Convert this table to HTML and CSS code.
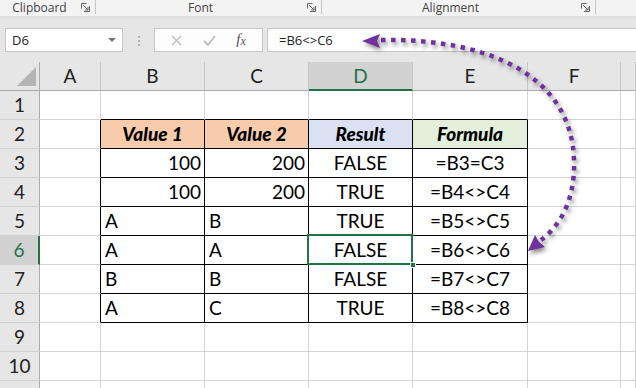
FILE: index.html
```html
<!DOCTYPE html>
<html lang="en">

<head>
    <meta charset="UTF-8">
    <meta name="viewport" content="width=device-width, initial-scale=1.0">
    <title>Not equal operator</title>
    <link rel="stylesheet" href="styles.css">
</head>

<body>
    <!-- ribbon group labels -->
    <div class="ribbon">
        <div class="group group-clipboard">Clipboard
            <svg class="launcher" width="9" height="9" viewBox="0 0 9 9"><path d="M0.5 0.5h5M0.5 0.5v5M8.5 3v5.5H3M2 2l5 5M4 7h3V4" fill="none" stroke="#666" stroke-width="1"/></svg>
        </div>
        <div class="group group-font">Font
            <svg class="launcher" width="9" height="9" viewBox="0 0 9 9"><path d="M0.5 0.5h5M0.5 0.5v5M8.5 3v5.5H3M2 2l5 5M4 7h3V4" fill="none" stroke="#666" stroke-width="1"/></svg>
        </div>
        <div class="group group-align">Alignment
            <svg class="launcher" width="9" height="9" viewBox="0 0 9 9"><path d="M0.5 0.5h5M0.5 0.5v5M8.5 3v5.5H3M2 2l5 5M4 7h3V4" fill="none" stroke="#666" stroke-width="1"/></svg>
        </div>
    </div>

    <!-- name box + formula bar -->
    <div class="formula-area">
        <div class="name-box">
            <span>D6</span>
            <svg width="8" height="4" viewBox="0 0 8 4"><path d="M0 0h8L4 4z" fill="#777"/></svg>
        </div>
        <div class="grip"><i></i><i></i><i></i></div>
        <div class="fx-buttons">
            <svg width="11" height="11" viewBox="0 0 11 11"><path d="M1 1l9 9M10 1l-9 9" stroke="#bdbdbd" stroke-width="1.4"/></svg>
            <svg width="13" height="11" viewBox="0 0 13 11"><path d="M1 6l4 4L12 1" fill="none" stroke="#bdbdbd" stroke-width="1.8"/></svg>
            <span class="fx"><i>f</i><i class="fx-x">x</i></span>
        </div>
        <div class="formula-input">=B6&lt;&gt;C6</div>
    </div>

    <!-- worksheet grid -->
    <div class="sheet">
        <div class="corner">
            <svg width="22" height="22" viewBox="0 0 22 22"><path d="M21 2V21H2z" fill="#b4b4b4"/></svg>
        </div>
        <div class="ch">A</div>
        <div class="ch">B</div>
        <div class="ch">C</div>
        <div class="ch active">D</div>
        <div class="ch">E</div>
        <div class="ch">F</div>
        <div class="ch"></div>

        <div class="rh">1</div>
        <div class="c"></div>
        <div class="c top"></div>
        <div class="c top"></div>
        <div class="c top"></div>
        <div class="c top"></div>
        <div class="c"></div>
        <div class="c"></div>

        <div class="rh">2</div>
        <div class="c edge"></div>
        <div class="c box head peach">Value 1</div>
        <div class="c box head peach">Value 2</div>
        <div class="c box head blue">Result</div>
        <div class="c box head green">Formula</div>
        <div class="c"></div>
        <div class="c"></div>

        <div class="rh">3</div>
        <div class="c edge"></div>
        <div class="c box num">100</div>
        <div class="c box num">200</div>
        <div class="c box mid">FALSE</div>
        <div class="c box mid">=B3=C3</div>
        <div class="c"></div>
        <div class="c"></div>

        <div class="rh">4</div>
        <div class="c edge"></div>
        <div class="c box num">100</div>
        <div class="c box num">200</div>
        <div class="c box mid">TRUE</div>
        <div class="c box mid">=B4&lt;&gt;C4</div>
        <div class="c"></div>
        <div class="c"></div>

        <div class="rh">5</div>
        <div class="c edge"></div>
        <div class="c box">A</div>
        <div class="c box">B</div>
        <div class="c box mid">TRUE</div>
        <div class="c box mid">=B5&lt;&gt;C5</div>
        <div class="c"></div>
        <div class="c"></div>

        <div class="rh active">6</div>
        <div class="c edge"></div>
        <div class="c box">A</div>
        <div class="c box">A</div>
        <div class="c box mid selected">FALSE<span class="handle"></span></div>
        <div class="c box mid">=B6&lt;&gt;C6</div>
        <div class="c"></div>
        <div class="c"></div>

        <div class="rh">7</div>
        <div class="c edge"></div>
        <div class="c box">B</div>
        <div class="c box">B</div>
        <div class="c box mid">FALSE</div>
        <div class="c box mid">=B7&lt;&gt;C7</div>
        <div class="c"></div>
        <div class="c"></div>

        <div class="rh">8</div>
        <div class="c edge"></div>
        <div class="c box">A</div>
        <div class="c box">C</div>
        <div class="c box mid">TRUE</div>
        <div class="c box mid">=B8&lt;&gt;C8</div>
        <div class="c"></div>
        <div class="c"></div>

        <div class="rh">9</div>
        <div class="c"></div>
        <div class="c"></div>
        <div class="c"></div>
        <div class="c"></div>
        <div class="c"></div>
        <div class="c"></div>
        <div class="c"></div>

        <div class="rh">10</div>
        <div class="c"></div>
        <div class="c"></div>
        <div class="c"></div>
        <div class="c"></div>
        <div class="c"></div>
        <div class="c"></div>
        <div class="c"></div>

        <div class="rh"></div>
        <div class="c"></div>
        <div class="c"></div>
        <div class="c"></div>
        <div class="c"></div>
        <div class="c"></div>
        <div class="c"></div>
        <div class="c"></div>
    </div>

    <!-- dotted callout linking the formula bar and E6 -->
    <svg class="callout" width="636" height="388" viewBox="0 0 636 388">
        <g class="callout-shadow">
            <path d="M381 40C485 38 573 74 574 162C575 200 560 226 541 240" fill="none" stroke="#7030a0" stroke-width="4.5" stroke-dasharray="4.5 5.5"/>
            <path d="M362 41L380 34L377 41L380 48z" fill="#7030a0"/>
            <path d="M528 251L535 235L539 242L545 247z" fill="#7030a0"/>
        </g>
    </svg>
</body>

</html>
```

FILE: styles.css
```css
 /* page */
 body {
     margin: 0;
     width: 636px;
     height: 388px;
     overflow: hidden;
     position: relative;
     background-color: #fff;
     font-family: "Open Sans", "Liberation Sans", sans-serif;
 }

 /* ribbon labels */
.ribbon {
     display: flex;
     height: 16px;
     background-color: #f3f3f3;
     font-size: 12px;
     color: #444;
 }

.group {
     position: relative;
     display: flex;
     align-items: center;
     justify-content: center;
     box-sizing: border-box;
     height: 14px;
     padding-right: 16px;
     border-right: 1px solid #c6c6c6;
 }

.group-clipboard {
     width: 96px;
 }

.group-font {
     width: 226px;
 }

.group-align {
     width: 274px;
 }

.launcher {
     position: absolute;
     right: 5px;
     top: 3px;
 }

 /* name box and formula bar */
.formula-area {
     display: flex;
     align-items: flex-start;
     box-sizing: border-box;
     height: 46px;
     padding-top: 12px;
     background: linear-gradient(#dedede, #e6e6e6 5px);
     font-size: 13px;
     color: #222;
 }

.name-box {
     display: flex;
     align-items: center;
     justify-content: space-between;
     box-sizing: border-box;
     width: 118px;
     height: 24px;
     margin-left: 5px;
     padding: 0 6px 0 6px;
     background-color: #fff;
     border: 1px solid #c6c6c6;
 }

.grip {
     display: flex;
     flex-direction: column;
     gap: 2px;
     width: 2px;
     margin: 8px 14px 0 15px;
}

.grip i {
     width: 2px;
     height: 2px;
     background-color: #b0b0b0;
 }

.fx-buttons {
     display: flex;
     align-items: center;
     justify-content: space-around;
     box-sizing: border-box;
     width: 109px;
     height: 24px;
     padding: 0 6px;
     background-color: #fdfdfd;
     border: 1px solid #c6c6c6;
 }

.fx {
     font-family: "Liberation Serif", serif;
     font-size: 15px;
     color: #555;
     margin-top: -2px;
 }

.fx-x {
     font-size: 12px;
     position: relative;
     top: 1px;
 }

.formula-input {
     flex: 1;
     box-sizing: border-box;
     height: 24px;
     margin-left: 4px;
     padding-left: 11px;
     line-height: 22px;
     background-color: #fff;
     border: 1px solid #c6c6c6;
     border-right: none;
 }

 /* sheet grid */
.sheet {
     display: grid;
     grid-template-columns: 40px 61px 104px 104px 104px 115px 93px 1fr;
     grid-template-rows: repeat(11, 29px) 20px;
     font-family: Lato, "Open Sans", sans-serif;
     font-size: 19px;
     color: #000;
 }

.sheet > div {
     box-sizing: border-box;
     line-height: 28px;
     white-space: nowrap;
     overflow: visible;
 }

.corner {
     background-color: #e6e6e6;
     border-right: 1px solid #ababab;
     border-bottom: 1px solid #ababab;
     display: flex;
     align-items: flex-end;
     justify-content: flex-end;
     padding: 0 2px 3px 0;
 }

.corner svg {
     display: block;
 }

.ch {
     background-color: #e6e6e6;
     border-right: 1px solid #c6c6c6;
     border-bottom: 1px solid #ababab;
     text-align: center;
     color: #222;
 }

.rh {
     background-color: #e6e6e6;
     border-right: 1px solid #ababab;
     border-bottom: 1px solid #d0d0d0;
     text-align: center;
     color: #222;
 }

.ch.active {
     background-color: #d2d2d2;
     color: #217346;
     border-bottom: 2px solid #217346;
 }

.rh.active {
     background-color: #d2d2d2;
     color: #217346;
     border-right: 2px solid #217346;
 }

.c {
     border-right: 1px solid #d4d4d4;
     border-bottom: 1px solid #d4d4d4;
     padding: 0 4px;
 }

 /* bordered table B2:E8 */
.c.top {
     border-bottom-color: #000;
 }

.c.edge {
     border-right-color: #000;
 }

.c.box {
     border-right-color: #000;
     border-bottom-color: #000;
 }

.head {
     font-weight: 900;
     font-style: italic;
     text-align: center;
 }

.peach {
     background-color: #f8cbad;
 }

.blue {
     background-color: #d9e1f2;
 }

.green {
     background-color: #e2efda;
 }

.num {
     text-align: right;
     padding-right: 3px;
 }

.mid {
     text-align: center;
 }

 /* active cell */
.selected {
     position: relative;
 }

.selected::after {
     content: "";
     position: absolute;
     top: -2px;
     left: -2px;
     right: -1px;
     bottom: -1px;
     border: 2px solid #217346;
 }

.handle {
     position: absolute;
     right: -4px;
     bottom: -4px;
     width: 6px;
     height: 6px;
     background-color: #217346;
     border: 1px solid #fff;
     box-sizing: border-box;
     z-index: 1;
 }

 /* purple dotted arrow */
.callout {
     position: absolute;
     top: 0;
     left: 0;
     pointer-events: none;
 }

.callout-shadow {
     filter: drop-shadow(2px 3px 2px rgba(0, 0, 0, 0.45));
 }
```
